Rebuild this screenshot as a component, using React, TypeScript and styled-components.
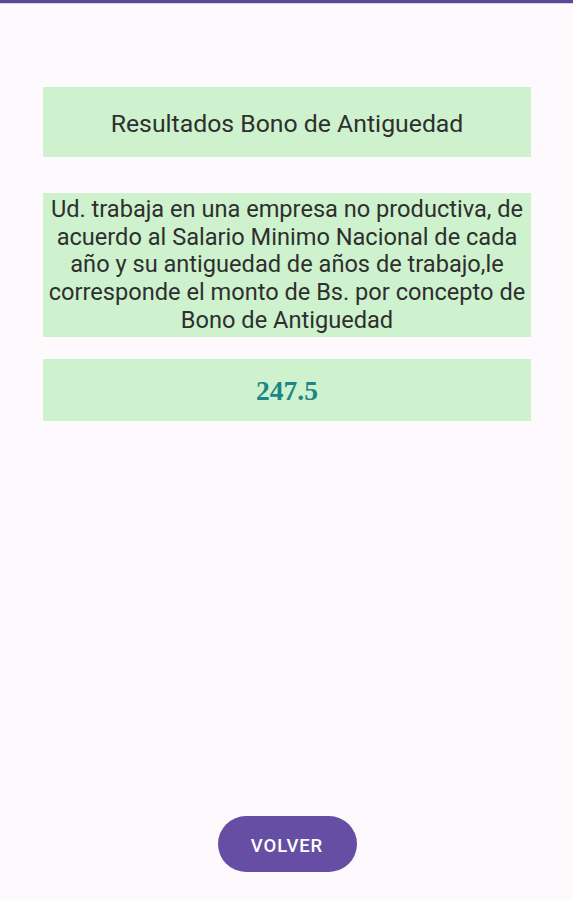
import React from "react";
import styled, { createGlobalStyle } from "styled-components";

const GlobalStyle = createGlobalStyle`
  html, body { margin: 0; padding: 0; background: #fdf9fd; }
  body { font-family: Roboto, "Noto Sans", sans-serif; }
`;

const Screen = styled.div`
  height: 900px;
  display: flex;
  flex-direction: column;
  background: #fdf9fd;
  box-sizing: border-box;
`;

const TopBar = styled.div`
  height: 3px;
  background: #5b4a93;
  border-bottom: 1px solid #d9cff0;
`;

const Content = styled.div`
  flex: 1;
  display: flex;
  flex-direction: column;
  align-items: center;
  padding-top: 83px;
`;

const Panel = styled.div<{ $h?: number; $mt?: number }>`
  width: 488px;
  margin-left: 1px;
  margin-top: ${(p) => p.$mt ?? 0}px;
  min-height: ${(p) => p.$h ?? 0}px;
  background: #cdf2cd;
  display: flex;
  align-items: center;
  justify-content: center;
  text-align: center;
  box-sizing: border-box;
`;

const Title = styled.div`
  font-size: 24.8px;
  color: #2f2f2f;
  margin-top: 2px;
`;

const Message = styled.div`
  font-size: 23.6px;
  line-height: 27.7px;
  color: #2f2f2f;
  padding: 3px 0 2px;
`;

const Amount = styled.div`
  font-family: "Liberation Serif", serif;
  font-weight: bold;
  font-size: 27.5px;
  color: #1d8585;
  margin-top: 2px;
`;

const Spacer = styled.div`
  flex: 1;
`;

const Button = styled.button`
  width: 139px;
  height: 56px;
  padding: 3px 0 0;
  border: none;
  border-radius: 28px;
  background: #654ea3;
  color: #ffffff;
  font-family: Roboto, sans-serif;
  font-weight: 500;
  font-size: 18.5px;
  letter-spacing: 0.9px;
  margin-bottom: 28px;
  margin-left: 1px;
`;

export default function App() {
  return (
    <>
      <GlobalStyle />
      <Screen>
        <TopBar />
        <Content>
          <Panel $h={70}>
            <Title>Resultados Bono de Antiguedad</Title>
          </Panel>
          <Panel $mt={36}>
            <Message>
              Ud. trabaja en una empresa no productiva, de acuerdo al Salario Minimo Nacional de cada
              año y su antiguedad de años de trabajo,le corresponde el monto de Bs. por concepto de
              Bono de Antiguedad
            </Message>
          </Panel>
          <Panel $h={62} $mt={22}>
            <Amount>247.5</Amount>
          </Panel>
          <Spacer />
          <Button>VOLVER</Button>
        </Content>
      </Screen>
    </>
  );
}
